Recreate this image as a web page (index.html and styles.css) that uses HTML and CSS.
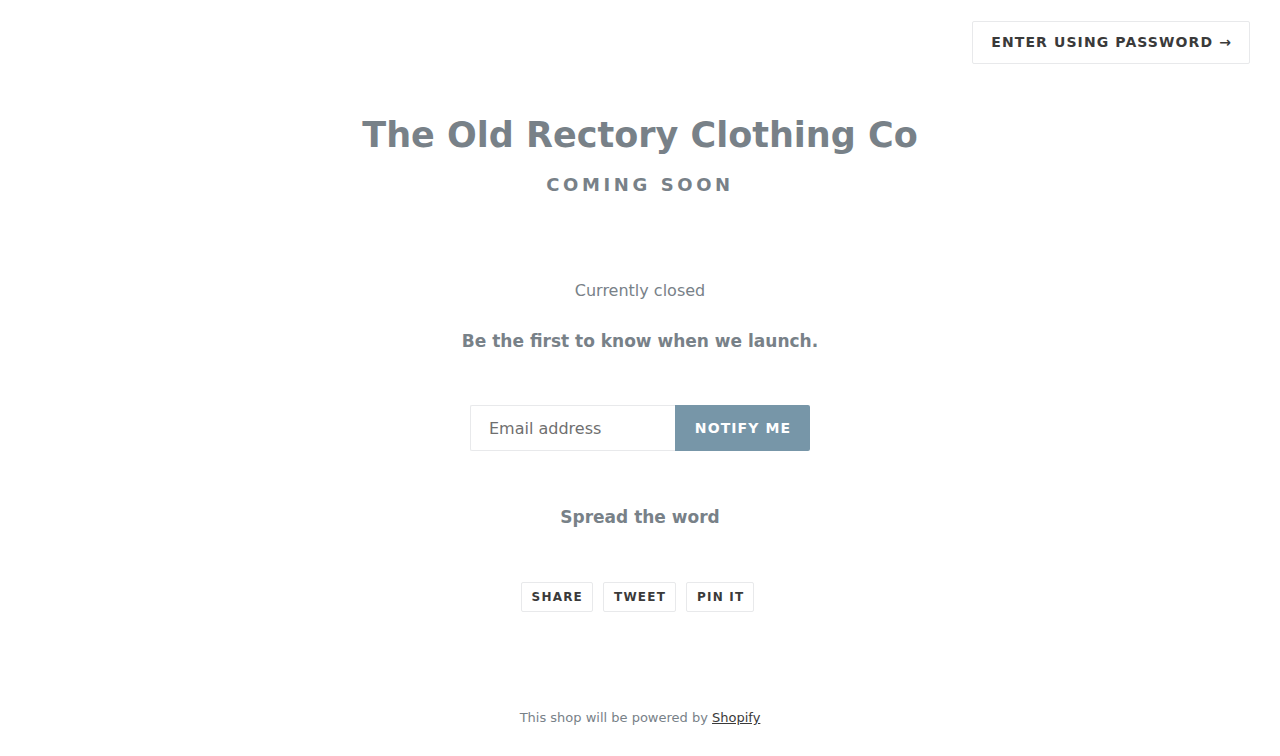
FILE: index.html
```html
<!DOCTYPE html>
<html>
<head>
<meta charset="utf-8">
<link rel="stylesheet" href="styles.css">
</head>
<body>
<header class="top">
  <a class="pw-btn" href="#">Enter using password →</a>
</header>
<main class="main">
  <h1 class="title">The Old Rectory Clothing Co</h1>
  <h2 class="subtitle">Coming Soon</h2>
  <p class="closed">Currently closed</p>
  <p class="launch">Be the first to know when we launch.</p>
  <form class="form">
    <input class="email" type="email" placeholder="Email address">
    <button class="notify" type="button">Notify me</button>
  </form>
  <p class="spread">Spread the word</p>
  <div class="share">
    <a class="share-btn" href="#">Share</a>
    <a class="share-btn" href="#">Tweet</a>
    <a class="share-btn" href="#">Pin it</a>
  </div>
</main>
<footer class="footer">This shop will be powered by <a href="#">Shopify</a></footer>
</body>
</html>
```
FILE: styles.css
```css
* { box-sizing: border-box; }
html, body { margin: 0; padding: 0; }
body {
  font-family: "DejaVu Sans", sans-serif;
  color: #788188;
  background: #fff;
  height: 756px;
  display: flex;
  flex-direction: column;
}
.top {
  display: flex;
  justify-content: flex-end;
  padding: 21px 30px 0 0;
}
.pw-btn {
  display: inline-flex;
  align-items: center;
  height: 43px;
  padding: 0 17px 1px 18px;
  border: 1px solid #e8e9eb;
  border-radius: 2px;
  color: #3a3a3a;
  font-weight: bold;
  font-size: 14px;
  letter-spacing: 1.1px;
  text-transform: uppercase;
  text-decoration: none;
}
.main {
  display: flex;
  flex-direction: column;
  align-items: center;
  flex: 1;
}
.title {
  margin: 45px 0 0;
  font-size: 35px;
  line-height: 52px;
  font-weight: bold;
}
.subtitle {
  margin: 10px 0 0;
  font-size: 18px;
  line-height: 28px;
  letter-spacing: 3.6px;
  text-transform: uppercase;
  font-weight: bold;
}
.closed {
  margin: 80px 0 0;
  font-size: 16px;
  line-height: 24px;
}
.launch {
  margin: 24px 0 0;
  font-size: 17px;
  line-height: 28px;
  font-weight: bold;
}
.form {
  display: flex;
  margin: 50px 0 0;
}
.email {
  width: 205px;
  height: 46px;
  border: 1px solid #e8e9eb;
  border-right: 0;
  padding: 0 18px;
  font-family: "DejaVu Sans", sans-serif;
  font-size: 16px;
  color: #3a3a3a;
  border-radius: 2px 0 0 2px;
  outline: none;
}
.email::placeholder { color: #6f6f6f; }
.notify {
  width: 135px;
  height: 46px;
  border: 0;
  padding: 0 0 0 1px;
  background: #7796a8;
  color: #fff;
  font-family: "DejaVu Sans", sans-serif;
  font-weight: bold;
  font-size: 14px;
  letter-spacing: 1.1px;
  text-transform: uppercase;
  border-radius: 0 2px 2px 0;
}
.spread {
  margin: 52px 0 0;
  font-size: 17px;
  line-height: 28px;
  font-weight: bold;
}
.share {
  display: flex;
  gap: 10px;
  margin: 51px 0 0;
  padding-right: 5px;
}
.share-btn {
  display: inline-flex;
  align-items: center;
  height: 30px;
  padding: 0 9px 0 10px;
  border: 1px solid #e8e9eb;
  border-radius: 2px;
  color: #3a3a3a;
  font-size: 12px;
  font-weight: bold;
  letter-spacing: 1.2px;
  text-transform: uppercase;
  text-decoration: none;
}
.footer {
  text-align: center;
  font-size: 13px;
  line-height: 20px;
  padding-bottom: 28px;
}
.footer a { color: #3a3a3a; }
```
